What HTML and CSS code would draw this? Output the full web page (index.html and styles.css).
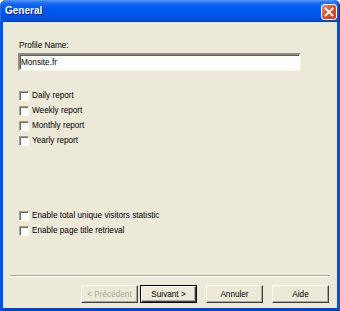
FILE: index.html
```html
<!DOCTYPE html>
<html lang="en">
<head>
    <meta charset="UTF-8">
    <title>General</title>
    <link rel="stylesheet" href="styles.css">
</head>
<body>
    <div class="window">
        <div class="titlebar">
            <span class="title">General</span>
            <button class="close-btn" aria-label="Close">
                <svg width="10" height="10" viewBox="0 0 10 10">
                    <path d="M1.5 1.5 L8.5 8.5 M8.5 1.5 L1.5 8.5" stroke="#fff" stroke-width="1.8" stroke-linecap="square"/>
                </svg>
            </button>
        </div>
        <div class="client">
            <div class="content">
                <label class="field-label" for="profile-name">Profile Name:</label>
                <input id="profile-name" class="textbox" type="text" value="Monsite.fr">

                <div class="check-group">
                    <label class="check-row"><span class="checkbox"></span>Daily report</label>
                    <label class="check-row"><span class="checkbox"></span>Weekly report</label>
                    <label class="check-row"><span class="checkbox"></span>Monthly report</label>
                    <label class="check-row"><span class="checkbox"></span>Yearly report</label>
                </div>

                <div class="check-group options">
                    <label class="check-row"><span class="checkbox"></span>Enable total unique visitors statistic</label>
                    <label class="check-row"><span class="checkbox"></span>Enable page title retrieval</label>
                </div>
            </div>

            <div class="separator"></div>
            <div class="buttons">
                <button class="btn" disabled>&lt; Précédent</button>
                <button class="btn default">Suivant &gt;</button>
                <button class="btn spaced">Annuler</button>
                <button class="btn spaced">Aide</button>
            </div>
        </div>
    </div>
</body>
</html>
```

FILE: styles.css
```css
html, body {
    margin: 0;
    padding: 0;
    background-color: #ffffff;
}
body {
    font-family: 'Liberation Sans', Arial, sans-serif;
    font-size: 8.2px;
    color: #000;
}
.window {
    width: 340px;
    height: 311px;
    display: flex;
    flex-direction: column;
    box-sizing: border-box;
}
.titlebar {
    height: 22px;
    flex-shrink: 0;
    display: flex;
    align-items: center;
    justify-content: space-between;
    padding: 0 3px 0 5px;
    border-radius: 6px 6px 0 0;
    background: linear-gradient(#5aa2fa 0px, #2a76f4 2px, #0c62f2 5px, #0058ee 10px, #0054e3 16px, #004dd8 20px, #0043cc 22px);
    box-shadow: inset 1px 0 #2e6fe0, inset -1px 0 #0029b4;
}
.title {
    color: #fff;
    font-weight: bold;
    font-size: 10px;
    text-shadow: 1px 1px #0a1c8a;
    padding-bottom: 1px;
}
.close-btn {
    width: 16px;
    height: 16px;
    padding: 0;
    margin-top: 1px;
    border: 1px solid #fff;
    border-radius: 3px;
    background: linear-gradient(135deg, #f08a68 0%, #e2532c 45%, #cf3a14 100%);
    display: flex;
    align-items: center;
    justify-content: center;
}
.client {
    flex: 1;
    display: flex;
    flex-direction: column;
    background-color: #ece9d8;
    border: 3px solid #0054e3;
    border-top: none;
    border-bottom-color: #0041c8;
}
.content {
    flex: 1;
    display: flex;
    flex-direction: column;
    padding: 18px 0 0 16px;
}
.field-label {
    line-height: 11px;
}
.textbox {
    margin: 2px 0 0 -1px;
    width: 283px;
    height: 18px;
    box-sizing: border-box;
    padding: 0 0 0 1px;
    font-family: inherit;
    font-size: 8.2px;
    color: #000;
    background: #fff;
    border: 2px solid;
    border-color: #8e8b7c #f7f6f0 #f7f6f0 #8e8b7c;
    box-shadow: inset 1px 1px #5f5d55;
    outline: none;
}
.check-group {
    display: flex;
    flex-direction: column;
    margin-top: 17px;
}
.check-group.options {
    margin-top: 60px;
}
.check-row {
    height: 15px;
    display: flex;
    align-items: center;
    gap: 3px;
}
.checkbox {
    width: 10px;
    height: 10px;
    box-sizing: border-box;
    background: #fff;
    border: 1px solid;
    border-color: #a09d8f #fff #fff #a09d8f;
    box-shadow: inset 1px 1px #6e6c63;
}
.separator {
    margin: 0 7px;
    height: 1px;
    background: #aca899;
    border-bottom: 1px solid #fff;
}
.buttons {
    display: flex;
    justify-content: flex-end;
    gap: 2px;
    padding: 8px 8px 5px 0;
}
.btn {
    width: 57px;
    height: 18px;
    box-sizing: border-box;
    padding: 0;
    font-family: inherit;
    font-size: 8.2px;
    color: #000;
    background: #ece9d8;
    border: 1px solid;
    border-color: #fff #404040 #404040 #fff;
    box-shadow: inset -1px -1px #aca899;
}
.btn:disabled {
    color: #aca899;
}
.btn.default {
    border-color: #000;
    box-shadow: inset 1px 1px #fff, inset -1px -1px #404040, inset -2px -2px #aca899;
}
.btn.spaced {
    margin-left: 7px;
}
```
